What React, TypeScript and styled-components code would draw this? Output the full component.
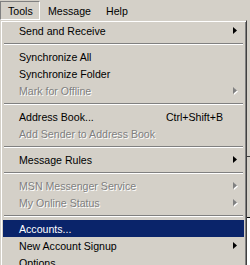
import React from 'react';
import styled, { createGlobalStyle } from 'styled-components';

const GlobalStyle = createGlobalStyle`
  html, body {
    margin: 0;
    padding: 0;
    width: 250px;
    height: 265px;
    overflow: hidden;
    background: #D4D0C8;
  }
`;

const Screen = styled.div`
  width: 250px;
  height: 265px;
  overflow: hidden;
  font-family: Tahoma, 'Liberation Sans', Arial, sans-serif;
  font-size: 10.6px;
  color: #000;
  background: #D4D0C8;
`;

const MenuBar = styled.div`
  display: flex;
  height: 20px;
  align-items: stretch;
  padding-top: 1px;
  box-sizing: border-box;
`;

const BarItem = styled.div<{ $pressed?: boolean; $width: number }>`
  display: flex;
  align-items: center;
  width: ${p => p.$width}px;
  padding-left: 7px;
  box-sizing: border-box;
  border: 1px solid ${p => (p.$pressed ? '#808080' : 'transparent')};
  border-right-color: ${p => (p.$pressed ? '#FFFFFF' : 'transparent')};
  border-bottom-color: ${p => (p.$pressed ? '#FFFFFF' : 'transparent')};
  white-space: nowrap;
`;

const Body = styled.div`
  display: flex;
`;

const Menu = styled.div`
  width: 247px;
  flex: none;
  box-sizing: border-box;
  border-left: 1px solid #D4D0C8;
  border-top: 1px solid #D4D0C8;
  border-right: 1px solid #404040;
  box-shadow: inset 1px 1px 0 #FFFFFF, inset -1px 0 0 #808080;
  padding: 1px 2px 0 2px;
  display: flex;
  flex-direction: column;
`;

const Item = styled.div<{ $disabled?: boolean; $active?: boolean }>`
  height: 17px;
  display: flex;
  align-items: center;
  padding-left: 16px;
  background: ${p => (p.$active ? '#0A246A' : 'transparent')};
  color: ${p => (p.$active ? '#FFFFFF' : p.$disabled ? '#808080' : '#000000')};
  text-shadow: ${p => (p.$disabled ? '1px 1px 0 #FFFFFF' : 'none')};
  white-space: nowrap;
`;

const Label = styled.span`
  flex: 1;
`;

const Shortcut = styled.span`
  padding-right: 1px;
`;

const ArrowCell = styled.span`
  width: 20px;
  height: 17px;
  display: flex;
  align-items: center;
  padding-left: 9px;
  box-sizing: border-box;
`;

const Separator = styled.div`
  height: 9px;
  display: flex;
  align-items: center;
  padding: 0 1px;
  &::after {
    content: '';
    flex: 1;
    height: 0;
    border-top: 1px solid #808080;
    border-bottom: 1px solid #FFFFFF;
  }
`;

const Behind = styled.div`
  flex: 1;
  display: flex;
  flex-direction: column;
  background: #D4D0C8;
`;

const BehindLine = styled.div<{ $h: number; $c: string }>`
  height: ${p => p.$h}px;
  background: ${p => p.$c};
`;

const Arrow = ({ disabled }: { disabled?: boolean }) => (
  <svg width="6" height="8" viewBox="0 0 6 8">
    {disabled && <path d="M1 1 L5 4.5 L1 8 Z" fill="#FFFFFF" />}
    <path d="M0 0 L4 3.5 L0 7 Z" fill={disabled ? '#808080' : '#000000'} />
  </svg>
);

type Entry =
  | { sep: true }
  | { label: string; shortcut?: string; sub?: boolean; disabled?: boolean; active?: boolean };

const entries: Entry[] = [
  { label: 'Send and Receive', sub: true },
  { sep: true },
  { label: 'Synchronize All' },
  { label: 'Synchronize Folder' },
  { label: 'Mark for Offline', sub: true, disabled: true },
  { sep: true },
  { label: 'Address Book...', shortcut: 'Ctrl+Shift+B' },
  { label: 'Add Sender to Address Book', disabled: true },
  { sep: true },
  { label: 'Message Rules', sub: true },
  { sep: true },
  { label: 'MSN Messenger Service', sub: true, disabled: true },
  { label: 'My Online Status', sub: true, disabled: true },
  { sep: true },
  { label: 'Accounts...', active: true },
  { label: 'New Account Signup', sub: true },
  { label: 'Options...' },
];

export default function App() {
  return (
    <>
      <GlobalStyle />
      <Screen>
        <MenuBar>
          <BarItem $pressed $width={40}>Tools</BarItem>
          <BarItem $width={58}>Message</BarItem>
          <BarItem $width={50}>Help</BarItem>
        </MenuBar>
        <Body>
          <Menu>
            {entries.map((e, i) =>
              'sep' in e ? (
                <Separator key={i} />
              ) : (
                <Item key={i} $disabled={e.disabled} $active={e.active}>
                  <Label>{e.label}</Label>
                  {e.shortcut && <Shortcut>{e.shortcut}</Shortcut>}
                  <ArrowCell>{e.sub && <Arrow disabled={e.disabled} />}</ArrowCell>
                </Item>
              )
            )}
          </Menu>
          <Behind>
            <BehindLine $h={136} $c="#D4D0C8" />
            <BehindLine $h={1} $c="#404040" />
            <BehindLine $h={60} $c="#D4D0C8" />
            <BehindLine $h={1} $c="#000000" />
            <BehindLine $h={60} $c="#FFFFFF" />
          </Behind>
        </Body>
      </Screen>
    </>
  );
}
